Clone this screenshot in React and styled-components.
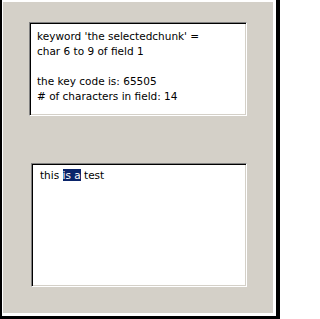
import React from 'react';
import styled, { createGlobalStyle } from 'styled-components';

const GlobalStyle = createGlobalStyle`
  html, body {
    margin: 0;
    padding: 0;
    background: #ffffff;
  }
`;

const Frame = styled.div`
  box-sizing: border-box;
  width: 280px;
  height: 319px;
  background: #ffffff;
  border-left: 2px solid #000000;
  border-right: 4px solid #000000;
  border-bottom: 3px solid #000000;
  padding: 2px 3px 3px 1px;
  display: flex;
`;

const Card = styled.div`
  flex: 1;
  background: #d4d0c8;
  display: flex;
  flex-direction: column;
  padding: 20px 0 0 ${p => p.$indent}px;
`;

const Field = styled.div`
  box-sizing: border-box;
  width: ${p => p.$width}px;
  height: ${p => p.$height}px;
  margin-left: ${p => p.$offset || 0}px;
  margin-top: ${p => p.$gap || 0}px;
  background: #ffffff;
  border-top: 1px solid #808080;
  border-left: 1px solid #808080;
  border-right: 1px solid #ffffff;
  border-bottom: 1px solid #ffffff;
  box-shadow: inset 1px 1px 0 #000000, inset -1px -1px 0 #d4d0c8;
  padding: ${p => p.$pad};
  font-family: Tahoma, "DejaVu Sans", "Liberation Sans", sans-serif;
  font-size: 10.5px;
  line-height: 15px;
  color: #000000;
`;

const Line = styled.div`
  min-height: 15px;
  white-space: pre;
`;

const Selected = styled.span`
  background: #0a246a;
  color: #ffffff;
`;

export default function App() {
  return (
    <>
      <GlobalStyle />
      <Frame>
        <Card $indent={26}>
          <Field $width={218} $height={94} $pad="6px 6px 0 7px">
            <Line>keyword 'the selectedchunk' =</Line>
            <Line>char 6 to 9 of field 1</Line>
            <Line />
            <Line>the key code is: 65505</Line>
            <Line># of characters in field: 14</Line>
          </Field>
          <Field $width={216} $height={124} $offset={2} $gap={47} $pad="4px 6px 0 8px">
            <Line>
              this <Selected>is a</Selected> test
            </Line>
          </Field>
        </Card>
      </Frame>
    </>
  );
}
